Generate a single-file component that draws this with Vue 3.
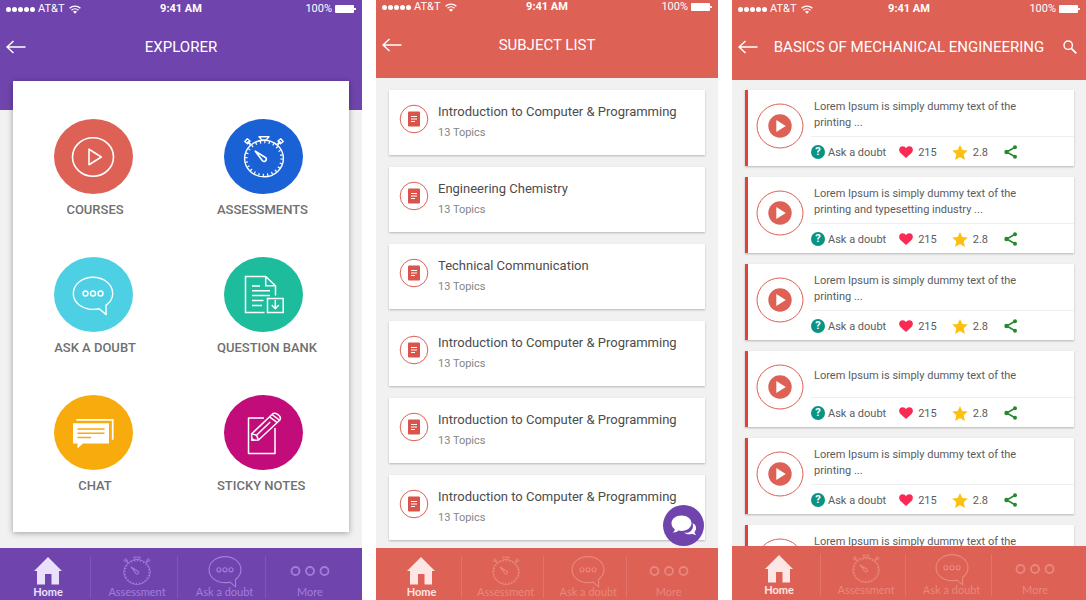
<script setup>
const tiles = [
  { label: 'COURSES', icon: 'play', color: '#dd6155' },
  { label: 'ASSESSMENTS', icon: 'stopwatch', color: '#1b61d6' },
  { label: 'ASK A DOUBT', icon: 'bubble', color: '#4dd0e3' },
  { label: 'QUESTION BANK', icon: 'document', color: '#1cbc9c' },
  { label: 'CHAT', icon: 'chat', color: '#f8ab0d' },
  { label: 'STICKY NOTES', icon: 'note', color: '#c10c7a' },
]

const intro = 'Introduction to Computer & Programming'
const subjects = [intro, 'Engineering Chemistry', 'Technical Communication', intro, intro, intro]

const short = 'Lorem Ipsum is simply dummy text of the printing ...'
const lessons = [
  short,
  'Lorem Ipsum is simply dummy text of the printing and typesetting industry ...',
  short,
  'Lorem Ipsum is simply dummy text of the',
  short,
  short,
]

const tabs = [
  { label: 'Home', icon: 'home' },
  { label: 'Assessment', icon: 'stopwatch' },
  { label: 'Ask a doubt', icon: 'bubble' },
  { label: 'More', icon: 'more' },
]

const screens = [
  { id: 'explorer', title: 'EXPLORER' },
  { id: 'subjects', title: 'SUBJECT LIST' },
  { id: 'lessons', title: 'BASICS OF MECHANICAL ENGINEERING' },
]
</script>

<template>
  <svg class="sprite" aria-hidden="true">
    <symbol id="wifi" viewBox="0 0 12 9">
      <g fill="none" stroke="currentColor" stroke-width="1.3">
        <path d="M.6 3.3a7.8 7.8 0 0 1 10.8 0" />
        <path d="M2.5 5.3a5 5 0 0 1 7 0" />
      </g>
      <path d="M6 8.8 4 6.8a2.9 2.9 0 0 1 4 0z" fill="currentColor" />
    </symbol>
    <symbol id="arrow" viewBox="0 0 20 14">
      <path d="M19.500 7H1M7.500 1 1 7l6.500 6" fill="none" stroke="currentColor" stroke-width="1.500" />
    </symbol>
    <symbol id="search" viewBox="0 0 14 14">
      <circle cx="5.200" cy="5.200" r="4.200" fill="none" stroke="currentColor" stroke-width="1.400" />
      <path d="m8.300 8.300 5 5" stroke="currentColor" stroke-width="1.800" />
    </symbol>
    <symbol id="play" viewBox="0 0 44 44">
      <g fill="none" stroke="currentColor" stroke-width="1.600">
        <ellipse cx="22" cy="22" rx="20.500" ry="19.300" />
        <path d="M18 14.200v15.600L30.300 22z" stroke-linejoin="round" />
      </g>
    </symbol>
    <symbol id="stopwatch" viewBox="0 0 44 44">
      <g fill="none" stroke="currentColor" stroke-width="1.400">
        <ellipse cx="22" cy="23.500" rx="19.400" ry="18.300" />
        <ellipse cx="22" cy="23.500" rx="17.600" ry="16.500" stroke-width="2.400" stroke-dasharray="1.200 3.250" />
        <path d="M17 1.700h10l-3 3.400h-4z" stroke-linejoin="round" />
        <path d="m8.500 9.500-3-3M35.500 9.500l3-3" stroke-width="1.800" />
        <path d="m2.800 6.500 2.500-2.700 2.700 2.200-2.500 2.700zM41.200 6.500l-2.500-2.700L36 6l2.500 2.700z" stroke-linejoin="round" />
        <path d="M13.300 16.200 20.500 25.700a2.200 2.200 0 0 0 3.300-2.900z" stroke-width="1.600" stroke-linejoin="round" />
      </g>
    </symbol>
    <symbol id="bubble" viewBox="0 0 44 42">
      <g fill="none" stroke="currentColor" stroke-width="1.400" stroke-linejoin="round">
        <path d="M28.200 34.700A24 19 0 0 1 22 35.400C11 35.400 2.300 28.400 2.300 19.400S11 3.200 22 3.200s19.700 7.200 19.700 16.200c0 5-2.600 9-6.800 12l.3 9.200z" />
        <circle cx="14.500" cy="19.500" r="2.500" />
        <circle cx="22" cy="19.500" r="2.500" />
        <circle cx="29.500" cy="19.500" r="2.500" />
      </g>
    </symbol>
    <symbol id="document" viewBox="0 0 44 42">
      <g fill="none" stroke="currentColor" stroke-width="1.500">
        <path d="M22.500 38.500H3.500v-36h20.200l9.800 9.300v9.700M23.700 2.500v9.300h9.800" />
        <path d="M10 12h8M10 16.700h18M10 21.500h18M10 26.500h11.500M10 31.500h10" />
        <path d="M25.500 24.500h15.700v14H25.500zM33.300 26v8.500M29.700 31l3.600 3.700 3.600-3.700" />
      </g>
    </symbol>
    <symbol id="chat" viewBox="0 0 44 32">
      <path d="M5.500 2.800h36.200v20" fill="none" stroke="currentColor" stroke-width="1.800" />
      <path d="M2 6.200h36v20.300H12l-5.500 5v-5H2z" fill="currentColor" />
      <path d="M6.500 12h27M6.500 16.300h27M6.500 20.500h13.500" stroke="#f8ab0d" stroke-width="1.500" />
    </symbol>
    <symbol id="note" viewBox="0 0 40 44">
      <g fill="none" stroke="currentColor" stroke-width="1.500" stroke-linejoin="round">
        <path d="M20 7H4.500v35.500H31V17" />
        <path d="m7.800 29.200-.2-6.300L28 3.500c3-3.200 10.500 1.500 7.700 5.800L14.500 29z" />
        <path d="m7.700 22.900 4.800 1.300 2 4.800M28 3.500l7.700 5.800M25.500 5.800l7.800 5.900M12.500 24.200 26.200 11" />
      </g>
      <path d="M7.500 26v3.500h3.700z" fill="currentColor" />
    </symbol>
    <symbol id="home" viewBox="0 0 28 28">
      <path d="M14 0 0 14h3v13.500h8V17h6.500v10.500H25V14h3z" fill="currentColor" />
    </symbol>
    <symbol id="more" viewBox="0 0 40 12">
      <g fill="none" stroke="currentColor" stroke-width="1.800">
        <circle cx="5.500" cy="6" r="4" />
        <circle cx="20" cy="6" r="4" />
        <circle cx="34.500" cy="6" r="4" />
      </g>
    </symbol>
    <symbol id="book" viewBox="0 0 30 30">
      <circle cx="15" cy="15" r="13.800" fill="#fff" stroke="#dd6155" />
      <rect x="9" y="7.500" width="12" height="15" rx="1" fill="#d9544a" />
      <path d="M12 12.500h6M12 15h6M12 17.500h4" stroke="#fff" />
    </symbol>
    <symbol id="watch" viewBox="0 0 48 46">
      <ellipse cx="24" cy="23" rx="23" ry="22" fill="#fff" stroke="#dd6155" />
      <circle cx="24" cy="23" r="11.700" fill="#dd6155" />
      <path d="M20.300 17v12l9.500-6z" fill="#fff" />
    </symbol>
    <symbol id="heart" viewBox="0 0 14 12">
      <path d="M7 12 1.500 7C-1.200 4.300.3.300 3.600.300 5.300.3 6.500 1.300 7 2.200 7.500 1.300 8.700.3 10.400.3c3.300 0 4.800 4 2.100 6.700z" fill="#fb2a55" />
    </symbol>
    <symbol id="star" viewBox="0 0 16 15">
      <path d="m8 0 2.300 5 5.500.6-4.100 3.700L12.900 15 8 12 3.100 15l1.200-5.700L.2 5.600l5.500-.6z" fill="#fdc010" />
    </symbol>
    <symbol id="share" viewBox="0 0 14 14">
      <path d="M11 2.300 2.700 7l8.300 4.700" fill="none" stroke="#27892f" stroke-width="1.600" />
      <g fill="#27892f">
        <circle cx="11" cy="2.300" r="2" />
        <circle cx="2.500" cy="7" r="2.200" />
        <circle cx="11" cy="11.700" r="2" />
      </g>
    </symbol>
    <symbol id="talk" viewBox="0 0 26 22">
      <path d="M17.500 17.500c3.500-1.500 5.500-5 4-9.500 3.500 1.500 5 5.500 2 9 .3 1.500 1 2.200 1.800 2.700-1.500.3-3-.1-4-1-3 1.100-6.500.6-8.300-1.200 1.500.3 3 .5 4.500 0z" fill="#fff" />
      <path d="M10.500.500c5.500 0 10 3.300 10 7.700s-4.500 7.700-10 7.700q-1.500 0-2.800-.3C6 17 4 17.600 1.800 17.500c1.200-1 2-2 2-3.300C1.700 12.800.5 10.700.5 8.200.5 3.800 5 .5 10.500.500z" fill="#fff" />
    </symbol>
  </svg>

  <main class="board">
    <section v-for="screen in screens" :key="screen.id" class="screen" :class="screen.id">
      <header class="top">
        <div class="status">
          <span class="carrier">
            <span class="signal"><i v-for="n in 5" :key="n"></i></span>
            AT&amp;T
            <svg class="wifi"><use href="#wifi" /></svg>
          </span>
          <span class="clock">9:41 AM</span>
          <span class="power">100% <span class="battery"></span></span>
        </div>
        <div class="bar">
          <button class="plain" aria-label="Back"><svg class="arrow"><use href="#arrow" /></svg></button>
          <h1>{{ screen.title }}</h1>
          <button v-if="screen.id === 'lessons'" class="plain end" aria-label="Search">
            <svg class="search"><use href="#search" /></svg>
          </button>
        </div>
      </header>

      <div class="content">
        <div v-if="screen.id === 'explorer'" class="tiles">
          <button v-for="tile in tiles" :key="tile.label" class="tile">
            <span class="disc" :style="{ background: tile.color }">
              <svg :class="tile.icon"><use :href="'#' + tile.icon" /></svg>
            </span>
            <span class="caption">{{ tile.label }}</span>
          </button>
        </div>

        <ul v-else-if="screen.id === 'subjects'" class="subject-list">
          <li v-for="(name, i) in subjects" :key="i" class="subject">
            <svg class="book"><use href="#book" /></svg>
            <div>
              <h2>{{ name }}</h2>
              <p>13 Topics</p>
            </div>
          </li>
        </ul>

        <ul v-else class="lesson-list">
          <li v-for="(text, i) in lessons" :key="i" class="lesson">
            <button class="plain watch" aria-label="Play"><svg><use href="#watch" /></svg></button>
            <div class="details">
              <p>{{ text }}</p>
              <div class="actions">
                <button class="plain ask"><span class="help">?</span>Ask a doubt</button>
                <button class="plain likes"><svg class="heart"><use href="#heart" /></svg>215</button>
                <span class="rating"><svg class="star"><use href="#star" /></svg>2.8</span>
                <button class="plain" aria-label="Share"><svg class="share"><use href="#share" /></svg></button>
              </div>
            </div>
          </li>
        </ul>
      </div>

      <button v-if="screen.id === 'subjects'" class="fab" aria-label="Chat">
        <svg><use href="#talk" /></svg>
      </button>

      <nav class="tabs">
        <a v-for="tab in tabs" :key="tab.label" href="#" :class="{ active: tab.icon === 'home' }">
          <span class="glyph"><svg :class="tab.icon"><use :href="'#' + tab.icon" /></svg></span>
          {{ tab.label }}
        </a>
      </nav>
    </section>
  </main>
</template>

<style>
body {
  margin: 0;
  background: #fff;
}
</style>

<style scoped>
.sprite {
  position: absolute;
  width: 0;
  height: 0;
}
.board {
  display: grid;
  grid-template-columns: 362fr 342fr 354fr;
  gap: 14px;
  height: 100vh;
  font-family: Roboto, "Liberation Sans", sans-serif;
}
.board svg {
  display: block;
  flex: none;
}
.screen {
  --theme: #dd6155;
  --faded: #ea877d;
  --line: #e2736a;
  --bright: #fde6e3;
  position: relative;
  display: flex;
  flex-direction: column;
  min-width: 0;
  min-height: 0;
  background: #f1f1f1;
}
.explorer {
  --theme: #6f45ad;
  --faded: #a27ddc;
  --line: #7e57bb;
  --bright: #ebe0fb;
}
.top {
  flex: none;
  background: var(--theme);
  color: #fff;
}
.status {
  display: grid;
  grid-template-columns: 1fr auto 1fr;
  align-items: center;
  padding: 1px 6px 0;
  font-size: 11px;
  line-height: 16px;
}
.subjects .status {
  line-height: 12px;
}
.carrier,
.power,
.signal {
  display: flex;
  align-items: center;
}
.carrier {
  gap: 3px;
}
.signal {
  gap: 1px;
}
.signal i {
  width: 5px;
  height: 5px;
  border-radius: 50%;
  background: #fff;
}
.wifi {
  width: 12px;
  height: 9px;
  margin-left: 2px;
}
.clock {
  font-weight: 700;
}
.power {
  justify-content: flex-end;
  gap: 3px;
}
.battery {
  position: relative;
  width: 19px;
  height: 8px;
  margin-right: 2px;
  border-radius: 1px;
  background: #fff;
}
.battery::after {
  content: "";
  position: absolute;
  left: 19px;
  top: 3px;
  width: 2px;
  height: 2px;
  background: #fff;
}
.bar {
  display: grid;
  grid-template-columns: 20px 1fr 20px;
  align-items: center;
  height: 59px;
  padding: 0 6px;
}
.explorer .top {
  padding-bottom: 34px;
}
.subjects .bar {
  height: 63px;
  padding-bottom: 2px;
}
.lessons .top {
  padding-bottom: 4px;
}
h1 {
  margin: 0;
  font-size: 15px;
  font-weight: 400;
  line-height: 20px;
  text-align: center;
  white-space: nowrap;
}
.plain {
  display: flex;
  align-items: center;
  padding: 0;
  border: 0;
  background: none;
  color: inherit;
  font: inherit;
  cursor: pointer;
}
.end {
  justify-content: center;
}
.arrow {
  width: 20px;
  height: 14px;
}
.search {
  width: 14px;
  height: 14px;
}
.content {
  flex: 1;
  min-height: 0;
  overflow: hidden;
}
.explorer .content {
  display: flex;
  margin-top: -29px;
  padding: 0 13px 16px;
  overflow: visible;
}
.tiles {
  flex: 1;
  display: grid;
  grid-template-columns: 112px 108px;
  grid-auto-rows: 99px;
  justify-content: space-between;
  row-gap: 39px;
  padding: 38px 24px 0;
  background: #fff;
  box-shadow: 0 1px 6px rgba(0, 0, 0, 0.35);
}
.tile {
  display: flex;
  flex-direction: column;
  align-items: center;
  gap: 8px;
  padding: 0;
  border: 0;
  background: none;
  color: #707070;
  font: 500 13px/16px Roboto, "Liberation Sans", sans-serif;
  white-space: nowrap;
  cursor: pointer;
}
.tile:nth-child(odd) .caption {
  padding-left: 4px;
}
.tile:nth-child(even) {
  align-items: flex-start;
}
.tile:nth-child(even) .disc {
  margin-left: 7px;
}
.disc {
  display: flex;
  align-items: center;
  justify-content: center;
  width: 79px;
  height: 75px;
  border-radius: 50%;
  color: #fff;
}
.disc svg {
  width: 44px;
  height: 44px;
}
.disc .bubble,
.disc .document {
  height: 42px;
}
.disc .chat {
  height: 32px;
}
.disc .note {
  width: 40px;
}
ul {
  display: grid;
  gap: 12px;
  margin: 0;
  list-style: none;
}
.subject-list {
  padding: 12px 13px;
}
.subject {
  display: flex;
  gap: 9px;
  height: 65px;
  padding: 0 10px;
  box-sizing: border-box;
  background: #fff;
  box-shadow: 0 1px 2px rgba(0, 0, 0, 0.25);
}
.book {
  width: 30px;
  height: 30px;
  margin-top: 14px;
}
h2 {
  margin: 12px 0 5px;
  color: #4c4c4c;
  font-size: 13px;
  font-weight: 400;
  line-height: 20px;
}
.subject p {
  margin: 0;
  color: #858585;
  font-size: 11px;
  line-height: 12px;
}
.lesson-list {
  padding: 10px 12px 0 13px;
}
.lesson {
  display: flex;
  gap: 7px;
  height: 76px;
  margin-bottom: -1px;
  padding-left: 8px;
  box-sizing: border-box;
  border-left: 3px solid #e04238;
  background: #fff;
  box-shadow: 0 1px 2px rgba(0, 0, 0, 0.25);
}
.watch {
  align-self: flex-start;
  margin-top: 13px;
}
.watch svg {
  width: 48px;
  height: 46px;
}
.details {
  flex: 1;
  color: #5c5c5c;
  font-size: 11px;
}
.details p {
  display: flex;
  align-items: center;
  height: 46px;
  max-width: 219px;
  margin: 0;
  padding: 4px 0 0 3px;
  box-sizing: border-box;
  line-height: 16px;
}
.actions {
  display: flex;
  align-items: center;
  height: 30px;
  border-top: 1px solid #efefef;
}
.ask {
  gap: 3px;
}
.help {
  width: 14px;
  height: 14px;
  border-radius: 50%;
  background: #089485;
  color: #fff;
  font-weight: 700;
  line-height: 14px;
  text-align: center;
}
.likes {
  gap: 5px;
  margin: 0 15px 0 13px;
}
.rating {
  display: flex;
  align-items: center;
  gap: 5px;
  margin-right: 16px;
}
.heart {
  width: 14px;
  height: 12px;
}
.star {
  width: 16px;
  height: 15px;
}
.share {
  width: 14px;
  height: 14px;
}
.fab {
  position: absolute;
  right: 14px;
  bottom: 54px;
  display: flex;
  align-items: center;
  justify-content: center;
  width: 41px;
  height: 41px;
  padding: 0;
  border: 0;
  border-radius: 50%;
  background: #6f45ad;
  cursor: pointer;
}
.fab svg {
  width: 26px;
  height: 22px;
}
.tabs {
  position: relative;
  flex: none;
  display: grid;
  grid-template-columns: 91fr 87fr 88fr 96fr;
  height: 52px;
  background: var(--theme);
}
.lessons .tabs {
  height: 54px;
}
.tabs a {
  display: flex;
  flex-direction: column;
  align-items: center;
  padding: 7px 0 0 5px;
  color: var(--faded);
  font: 400 11px/12px Lato, "Liberation Sans", sans-serif;
  text-decoration: none;
  white-space: nowrap;
  background: linear-gradient(var(--line), var(--line)) right 8px / 1px 42px no-repeat;
}
.tabs a:last-child {
  padding: 7px 8px 0 0;
  background: none;
}
.tabs .active {
  color: var(--bright);
  font-weight: 700;
}
.glyph {
  display: flex;
  align-items: center;
  height: 31px;
}
.glyph .home {
  width: 28px;
  height: 28px;
}
.glyph .stopwatch {
  width: 30px;
  height: 30px;
}
.glyph .bubble {
  width: 36px;
  height: 34px;
}
.glyph .more {
  width: 40px;
  height: 12px;
}
</style>
